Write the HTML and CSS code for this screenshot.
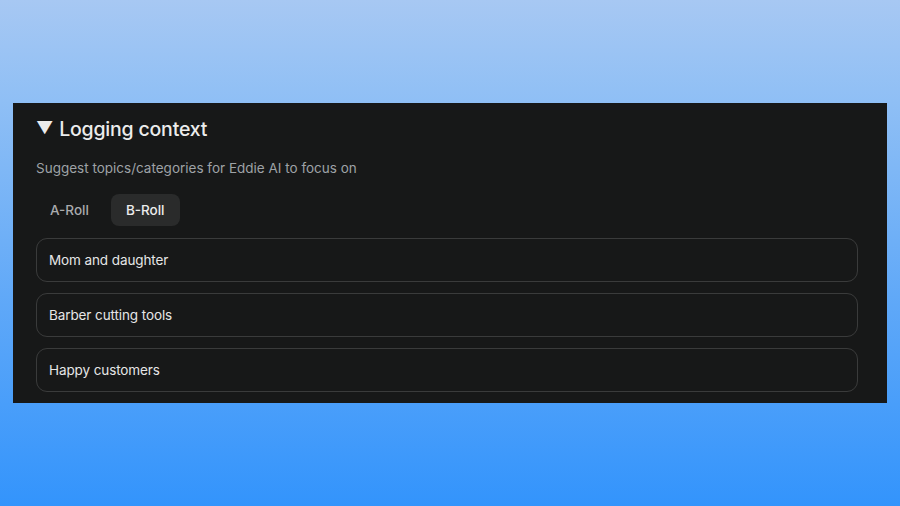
FILE: index.html
```html
<!DOCTYPE html>
<html>
<head>
<meta charset="utf-8">
<link rel="stylesheet" href="styles.css">
</head>
<body>
<div class="stage">
  <section class="panel">
    <h2 class="title"><span class="tri">▼</span>Logging context</h2>
    <p class="sub">Suggest topics/categories for Eddie AI to focus on</p>
    <div class="tabs">
      <span class="tab">A-Roll</span>
      <span class="tab active">B-Roll</span>
    </div>
    <div class="list">
      <div class="item">Mom and daughter</div>
      <div class="item">Barber cutting tools</div>
      <div class="item">Happy customers</div>
    </div>
  </section>
</div>
</body>
</html>
```
FILE: styles.css
```css
html, body { margin: 0; padding: 0; }
body {
  width: 900px;
  height: 506px;
  overflow: hidden;
  font-family: Inter, "Noto Sans", sans-serif;
  background: linear-gradient(180deg, #a7c8f3 0%, #8fbff5 20%, #5fa8f8 60%, #3394fc 100%);
}
.stage {
  padding: 103px 13px 0 13px;
}
.panel {
  background: #171818;
  height: 300px;
  box-sizing: border-box;
  padding: 15px 29px 0 23px;
  overflow: hidden;
}
.title {
  margin: 0;
  font-size: 19.5px;
  font-weight: 500;
  color: #ececec;
  letter-spacing: -0.2px;
  display: flex;
  align-items: center;
  height: 22px;
}
.tri {
  font-size: 17px;
  margin-right: 6px;
  position: relative;
  top: -1px;
}
.sub {
  margin: 20px 0 0 0;
  font-size: 13.5px;
  color: #9ea2a6;
  letter-spacing: 0;
  line-height: 16px;
}
.tabs {
  display: flex;
  gap: 8px;
  margin-top: 18px;
}
.tab {
  font-size: 13.5px;
  color: #a9abad;
  padding: 0 14px;
  height: 32px;
  line-height: 32px;
  border-radius: 8px;
  font-weight: 500;
}
.tab.active {
  background: #2a2b2b;
  color: #ececec;
  padding: 0 15px;
}
.list {
  margin-top: 12px;
  display: flex;
  flex-direction: column;
  gap: 11px;
}
.item {
  height: 44px;
  box-sizing: border-box;
  border: 1px solid #3a3b3b;
  border-radius: 11px;
  padding: 0 12px;
  display: flex;
  align-items: center;
  font-size: 13.5px;
  color: #e6e6e6;
  letter-spacing: -0.1px;
}
```
